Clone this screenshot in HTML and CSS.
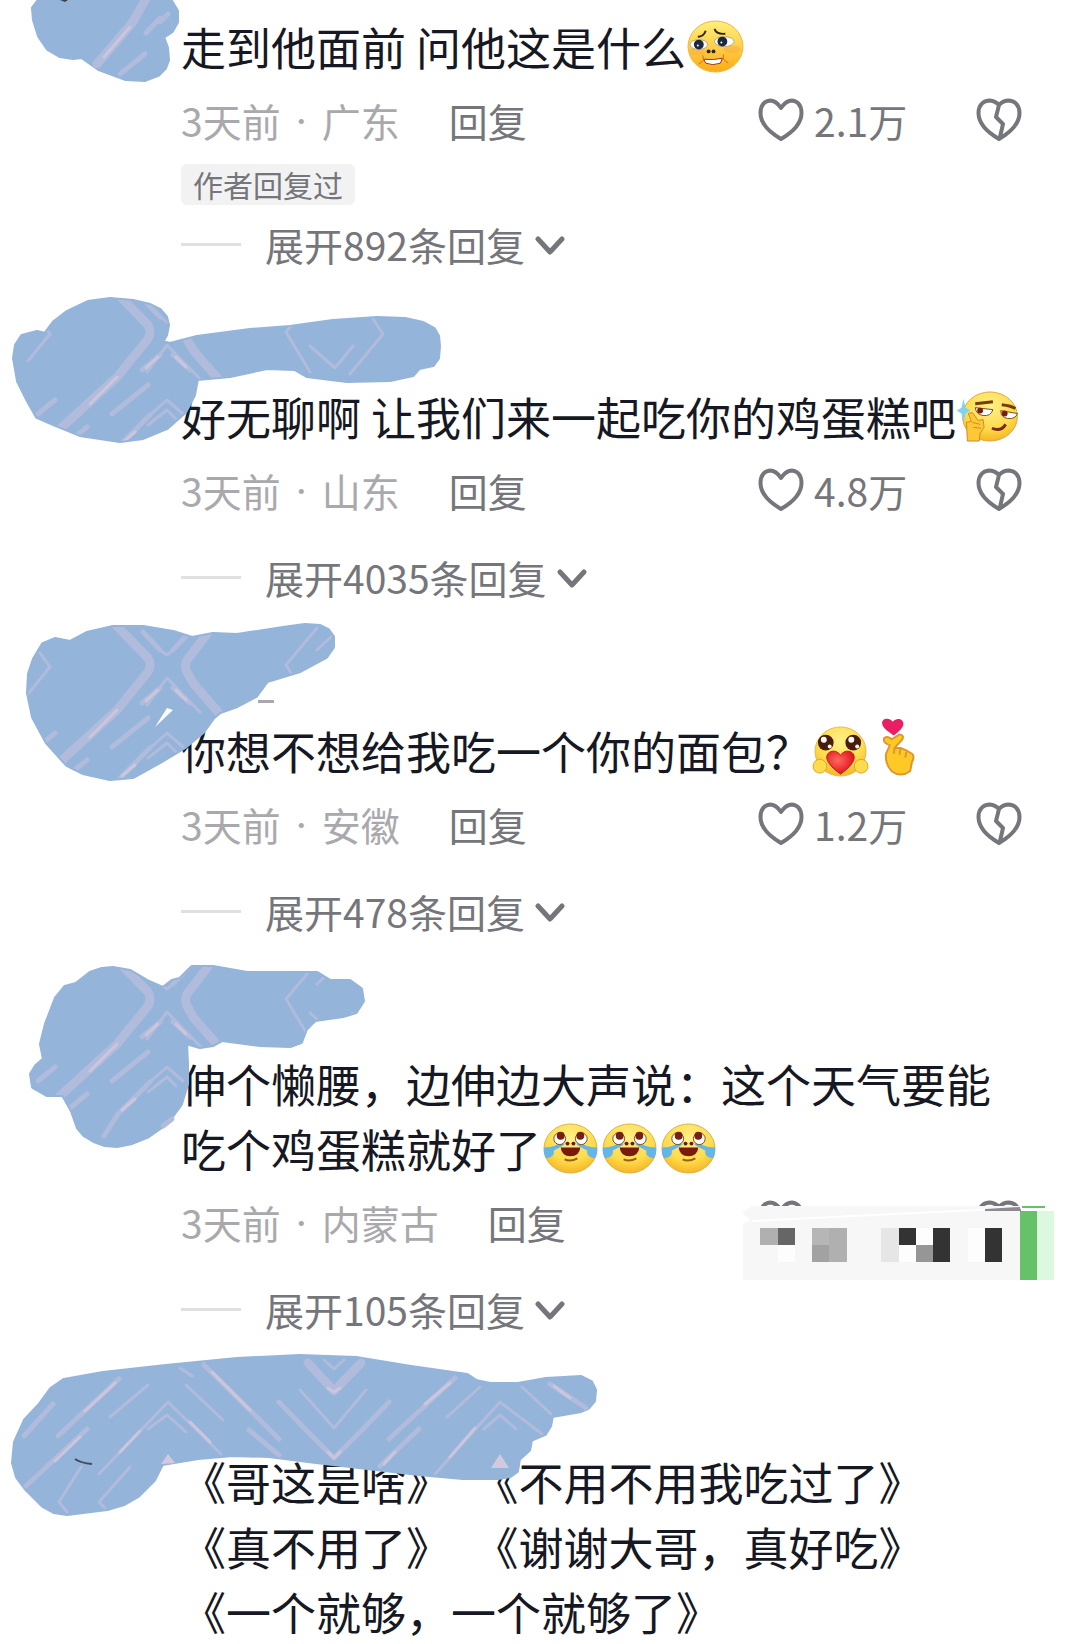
FILE: index.html
```
<!DOCTYPE html>
<html lang="zh-CN">
<head>
    <meta charset="UTF-8">
    <meta name="viewport" content="width=device-width, initial-scale=1.0">
    <title>评论</title>
    <link rel="stylesheet" href="styles.css">
</head>
<body>
    <!-- Shared icons -->
    <svg class="sprite" width="0" height="0" aria-hidden="true">
        <defs>
            <radialGradient id="face" cx="0.5" cy="0.3" r="0.75">
                <stop offset="0" stop-color="#fff08a"/>
                <stop offset="0.6" stop-color="#fddc4c"/>
                <stop offset="1" stop-color="#f6ae1e"/>
            </radialGradient>
            <linearGradient id="faceWarm" x1="0" y1="0" x2="0" y2="1">
                <stop offset="0" stop-color="#fdf07c"/>
                <stop offset="0.5" stop-color="#fdd04a"/>
                <stop offset="1" stop-color="#fbab14"/>
            </linearGradient>
            <radialGradient id="red" cx="0.4" cy="0.4" r="0.6">
                <stop offset="0" stop-color="#ff6a60"/>
                <stop offset="1" stop-color="#e0141c"/>
            </radialGradient>
        </defs>
        <symbol id="heart" viewBox="0 0 46 44">
            <path d="M23 10C19 4 15 2.500 12 2.500C6 3 2.500 8 2.500 15C2.500 26 11 34 23 41C35 34 43.500 26 43.500 15C43.500 8 40 3 34 2.500C31 2.500 27 4 23 10Z"/>
        </symbol>
        <symbol id="broken" viewBox="0 0 46 44">
            <path d="M23 7C19 3 16 2.500 13 2.500C6.500 3 2.500 8 2.500 15C2.500 26 11 34 23 41C35 34 43.500 26 43.500 15C43.500 8 39.500 3 33 2.500C29 2.500 26 3.500 23 7ZM23 7L20 19L27 26L24 39"/>
        </symbol>
        <symbol id="chevron" viewBox="0 0 30 20">
            <path d="M3 3L15 16L27 3"/>
        </symbol>
        <symbol id="worried" viewBox="0 0 60 54">
            <ellipse cx="30" cy="27" rx="28" ry="26" fill="url(#faceWarm)" stroke="#f3b23a"/>
            <ellipse cx="11" cy="32" rx="8" ry="4" fill="#fba445" opacity="0.4"/>
            <ellipse cx="47" cy="30" rx="9" ry="4" fill="#fba445" opacity="0.4"/>
            <ellipse cx="13" cy="25" rx="9" ry="5" fill="#fff" stroke="#b5a878"/>
            <ellipse cx="39" cy="22" rx="10" ry="5" fill="#fff" stroke="#b5a878"/>
            <circle cx="13" cy="25" r="5" fill="#1c2740"/>
            <circle cx="37" cy="22" r="5" fill="#1c2740"/>
            <circle cx="12" cy="26" r="1" fill="#fff"/>
            <circle cx="36" cy="23" r="1" fill="#fff"/>
            <path d="M12 17Q18 17 20 11M29 9Q31 15 40 14" fill="none" stroke="#33250d" stroke-width="2"/>
            <circle cx="23" cy="32" r="2" fill="#33250d"/>
            <circle cx="28" cy="32" r="2" fill="#33250d"/>
            <path d="M18 40Q28 41 37 39L35 44Q27 47 20 44Z" fill="#fff" stroke="#a32c18"/>
            <path d="M17 36L18 41L13 45M38 35V40L43 44" fill="none" stroke="#d9681a" stroke-width="1"/>
        </symbol>
        <symbol id="smirk" viewBox="0 0 64 54">
            <ellipse cx="34" cy="27" rx="28" ry="25" fill="url(#face)" stroke="#dba743"/>
            <path d="M19 14L37 12M46 15Q56 16 60 19" fill="none" stroke="#7a3a0c" stroke-width="3"/>
            <path d="M19 18L37 20Q35 27 27 26Q20 25 19 18Z" fill="#fff" stroke="#7a4a1c"/>
            <path d="M45 21L62 24Q60 30 52 29Q45 28 45 21Z" fill="#fff" stroke="#7a4a1c"/>
            <circle cx="24" cy="21" r="3" fill="#7a1f10"/>
            <circle cx="49" cy="24" r="3" fill="#7a1f10"/>
            <path d="M36 39Q45 43 50 35" fill="none" stroke="#7a2a10" stroke-width="3"/>
            <path d="M11 52L10 33L15 32L12 24L16 23L22 31L27 30L28 38L24 44L23 52Z" fill="#fcc835" stroke="#d0892a" stroke-linejoin="round"/>
            <path d="M16 33L24 35M17 38L25 39" stroke="#d0892a"/>
            <path d="M7 9L9 18L14 21L9 24L7 33L5 24L0 21L5 18Z" fill="#7fd3ee"/>
        </symbol>
        <symbol id="hug" viewBox="0 0 60 54">
            <ellipse cx="30" cy="28" rx="26" ry="25" fill="url(#face)" stroke="#e3b75a"/>
            <circle cx="15" cy="19" r="8" fill="#4a1c0c"/>
            <circle cx="43" cy="19" r="8" fill="#4a1c0c"/>
            <circle cx="13" cy="16" r="3" fill="#fff"/>
            <circle cx="41" cy="16" r="3" fill="#fff"/>
            <circle cx="19" cy="23" r="2" fill="#fff"/>
            <circle cx="47" cy="23" r="2" fill="#fff"/>
            <path d="M30 51C20 44 16 38 16 34C16 27 26 25 30 32C34 25 44 27 44 34C44 38 40 44 30 51Z" fill="url(#red)" stroke="#c41518"/>
            <circle cx="9" cy="43" r="7" fill="#fddc4c" stroke="#dfa22e"/>
            <circle cx="51" cy="43" r="7" fill="#fddc4c" stroke="#dfa22e"/>
        </symbol>
        <symbol id="finger" viewBox="0 0 60 62">
            <path d="M24 19C16 14 12 10 12 6C12 1 20 0 23 5C27 0 34 2 34 7C34 11 30 15 24 19Z" fill="#ea1f63"/>
            <path d="M14 22Q18 19 22 23L30 18Q35 19 33 23L25 32L31 32L36 34L43 38Q46 41 43 46L41 56Q31 63 22 56Q15 49 16 38L20 29Q13 27 14 22Z" fill="#fdc926" stroke="#e0962c" stroke-width="2" stroke-linejoin="round"/>
            <path d="M25 32L24 38M31 33L30 39M37 36L36 42" stroke="#e0962c" stroke-width="2"/>
        </symbol>
        <symbol id="tears" viewBox="0 0 60 54">
            <ellipse cx="30" cy="27" rx="27" ry="25" fill="url(#face)" stroke="#d9b24c"/>
            <path d="M19 20Q17 25 3 26Q2 32 5 37Q14 36 13 29Q20 26 24 23ZM41 20Q43 25 57 26Q58 32 55 37Q46 36 47 29Q40 26 36 23Z" fill="#64b5ea"/>
            <circle cx="19" cy="17" r="6" fill="#fff" stroke="#7a4a1c"/>
            <circle cx="41" cy="17" r="6" fill="#fff" stroke="#7a4a1c"/>
            <circle cx="20" cy="14" r="4" fill="#7a1f10"/>
            <circle cx="40" cy="14" r="4" fill="#7a1f10"/>
            <circle cx="27" cy="22" r="2" fill="#6b1c0c"/>
            <circle cx="33" cy="22" r="2" fill="#6b1c0c"/>
            <path d="M20 26H40Q39 35 30 35Q21 35 20 26Z" fill="#7a1a0c"/>
            <path d="M24 38Q30 41 37 37" fill="none" stroke="#a35a18" stroke-width="2"/>
        </symbol>
        <g id="streaks">
            <path class="wide" d="M115 22L148 56Q152 63 148 70L117 108L60 160M210 28L187 58Q184 64 187 70L193 81L220 112"/>
            <path class="mid" d="M143 30L160 48M173 48L190 30M160 86L142 101M173 86L190 101M148 116L112 145M55 131L38 145M87 158L70 172M118 178L150 146"/>
            <path class="thin" d="M160 48L167 53L173 48M147 103L167 76L200 110M150 146L167 131L183 145M148 156L167 141L176 150M28 92L50 65L40 51M317 26L286 63L310 103M373 50L383 65L350 105M310 77L335 99L353 77M333 33L317 48"/>
            <path class="pink" d="M117 108L90 135M158 88L146 99M176 88L186 98M135 163L122 174"/>
        </g>
    </svg>

    <main class="comments">
        <article class="comment first">
            <p class="text">走到他面前 问他这是什么<svg class="emoji" role="img" aria-label="委屈"><use href="#worried"/></svg></p>
            <div class="meta">
                <span>3天前</span><span class="dot">·</span><span>广东</span>
                <button class="reply">回复</button>
                <div class="actions">
                    <button class="like"><svg class="icon"><use href="#heart"/></svg>2.1万</button>
                    <button class="dislike" aria-label="不喜欢"><svg class="icon"><use href="#broken"/></svg></button>
                </div>
            </div>
            <span class="badge">作者回复过</span>
            <button class="expand">展开892条回复<svg class="chevron"><use href="#chevron"/></svg></button>
            <svg class="scribble" viewBox="0 0 640 200" aria-hidden="true">
                <polygon points="42,-4 33,8 34,20 39,36 48,49 60,56 73,58 82,57 99,69 126,79 145,80 158,75 165,68 168,60 167,48 163,37 172,31 177,22 177,11 168,-4"/>
                <path class="wide" d="M145 0L133 22L97 64"/>
                <path class="mid" d="M160 18L146 33M168 14L160 22M145 54L120 74"/>
                <path class="pink" d="M130 27L104 57"/>
                <path d="M60 0H68L65 2Z" fill="#3c444c"/>
            </svg>
        </article>

        <article class="comment">
            <p class="text">好无聊啊 让我们来一起吃你的鸡蛋糕吧<svg class="emoji wide-emoji" role="img" aria-label="机智"><use href="#smirk"/></svg></p>
            <div class="meta">
                <span>3天前</span><span class="dot">·</span><span>山东</span>
                <button class="reply">回复</button>
                <div class="actions">
                    <button class="like"><svg class="icon"><use href="#heart"/></svg>4.8万</button>
                    <button class="dislike" aria-label="不喜欢"><svg class="icon"><use href="#broken"/></svg></button>
                </div>
            </div>
            <button class="expand">展开4035条回复<svg class="chevron"><use href="#chevron"/></svg></button>
            <svg class="scribble" viewBox="0 0 640 200" aria-hidden="true">
                <clipPath id="clip2"><polygon points="45,65 54,53 67,43 88,33 110,30 133,32 150,36 160,41 166,48 168,56 166,66 162,73 170,75 197,68 250,61 290,58 333,52 377,49 405,50 423,54 434,60 440,70 438,89 433,96 419,99 413,106 390,111 347,112 307,107 295,100 267,99 230,107 197,110 194,126 185,143 167,159 143,169 120,172 80,166 53,155 37,148 28,132 18,112 14,89 16,76 22,67 37,63"/></clipPath>
                <polygon points="45,65 54,53 67,43 88,33 110,30 133,32 150,36 160,41 166,48 168,56 166,66 162,73 170,75 197,68 250,61 290,58 333,52 377,49 405,50 423,54 434,60 438,67 439,77 438,89 433,96 419,99 413,106 390,111 347,112 307,107 295,100 267,99 230,107 197,110 194,126 185,143 167,159 143,169 120,172 80,166 53,155 37,148 28,132 18,112 14,89 16,76 22,67 37,63"/>
                <use href="#streaks" clip-path="url(#clip2)"/>
            </svg>
        </article>

        <article class="comment">
            <p class="text">你想不想给我吃一个你的面包？<svg class="emoji" role="img" aria-label="比心"><use href="#hug"/></svg><svg class="emoji tall-emoji" role="img" aria-label="爱心手势"><use href="#finger"/></svg></p>
            <div class="meta">
                <span>3天前</span><span class="dot">·</span><span>安徽</span>
                <button class="reply">回复</button>
                <div class="actions">
                    <button class="like"><svg class="icon"><use href="#heart"/></svg>1.2万</button>
                    <button class="dislike" aria-label="不喜欢"><svg class="icon"><use href="#broken"/></svg></button>
                </div>
            </div>
            <button class="expand">展开478条回复<svg class="chevron"><use href="#chevron"/></svg></button>
            <svg class="scribble" viewBox="0 0 640 200" aria-hidden="true">
                <clipPath id="clip3"><polygon points="70,40 87,31 113,25 143,25 173,30 192,36 213,32 237,33 283,26 305,23 320,24 331,31 334,45 326,55 300,69 267,79 256,94 237,104 220,110 213,116 203,130 185,145 160,160 133,175 110,177 83,171 67,163 47,141 33,115 28,91 29,72 34,57 43,42 55,37 65,39"/></clipPath>
                <polygon points="70,40 87,31 113,25 143,25 173,30 192,36 213,32 237,33 283,26 305,23 320,24 328,28 333,35 333,45 326,55 300,69 267,79 256,94 237,104 220,110 213,116 203,130 185,145 160,160 133,175 110,177 83,171 67,163 47,141 33,115 28,91 29,72 34,57 43,42 55,37 65,39"/>
                <use href="#streaks" clip-path="url(#clip3)"/>
                <path d="M167 106L173 108L155 125Z" fill="#fff"/>
                <rect x="258" y="98" width="16" height="3" fill="#a9a9ab"/>
            </svg>
        </article>

        <article class="comment">
            <p class="text">伸个懒腰，边伸边大声说：这个天气要能吃个鸡蛋糕就好了<svg class="emoji" role="img" aria-label="笑哭"><use href="#tears"/></svg><svg class="emoji" role="img" aria-label="笑哭"><use href="#tears"/></svg><svg class="emoji" role="img" aria-label="笑哭"><use href="#tears"/></svg></p>
            <div class="meta">
                <span>3天前</span><span class="dot">·</span><span>内蒙古</span>
                <button class="reply">回复</button>
                <div class="actions">
                    <button class="like" aria-label="喜欢"><svg class="icon"><use href="#heart"/></svg></button>
                    <button class="dislike" aria-label="不喜欢"><svg class="icon"><use href="#broken"/></svg></button>
                    <svg class="mosaic" viewBox="0 0 312 76" aria-hidden="true">
                        <path d="M0 9L10 2H278V76H1V20L8 16Z" fill="#f7f7f7"/>
                        <path d="M10 17L278 4" stroke="#fff" stroke-width="2"/>
                        <path d="M243 5L278 3V7H243Z" fill="#8d8a92"/>
                        <path d="M280 2H303V4H280ZM278 7H295V76H278Z" fill="#67c168"/>
                        <path d="M295 7H312V76H295Z" fill="#dcf9df"/>
                        <path d="M18 24H36V41H18ZM87 24H105V58H87Z" fill="#b0b0b0"/>
                        <path d="M36 24H53V41H36Z" fill="#666"/>
                        <path d="M70 24H87V41H70Z" fill="#b6b6b6"/>
                        <path d="M70 41H87V58H70Z" fill="#a2a2a2"/>
                        <path d="M139 24H157V58H139Z" fill="#e6e6e6"/>
                        <path d="M36 41H53V58H36ZM157 41H174V58H157ZM174 24H191V41H174ZM226 24H243V58H226Z" fill="#fdfdfd"/>
                        <path d="M157 24H174V41H157ZM191 24H208V58H191ZM243 24H260V58H243Z" fill="#333"/>
                        <path d="M174 41H191V58H174Z" fill="#969696"/>
                    </svg>
                </div>
            </div>
            <button class="expand">展开105条回复<svg class="chevron"><use href="#chevron"/></svg></button>
            <svg class="scribble" viewBox="0 0 640 220" aria-hidden="true">
                <clipPath id="clip4"><polygon points="76,48 90,37 102,33 113,32 130,35 147,45 163,52 172,45 180,43 192,31 213,31 247,37 317,37 330,45 350,45 361,53 364,63 356,76 343,80 315,84 306,93 301,106 290,110 260,109 222,104 213,109 200,111 186,107 187,128 187,148 181,168 167,187 147,201 117,210 94,205 78,192 72,175 63,159 47,159 33,151 31,138 36,130 44,123 41,108 46,88 56,62 65,51"/></clipPath>
                <polygon points="76,48 90,37 102,33 113,32 130,35 147,45 163,52 172,45 180,43 192,31 213,31 247,37 317,37 330,45 350,45 361,53 363,65 356,76 343,80 315,84 306,93 301,106 290,110 260,109 222,104 213,109 200,111 186,107 187,128 187,148 181,168 167,187 147,201 132,207 117,210 105,209 94,205 84,199 78,192 72,175 63,159 47,159 33,151 31,138 36,130 44,123 41,108 46,88 56,62 65,51"/>
                <use href="#streaks" clip-path="url(#clip4)"/>
                <path class="mid" d="M118 178L104 200M172 183L163 190"/>
            </svg>
        </article>

        <article class="comment">
            <p class="text">《哥这是啥》&ensp;《不用不用我吃过了》<br>《真不用了》&ensp;《谢谢大哥，真好吃》<br>《一个就够，一个就够了》</p>
            <svg class="scribble" viewBox="0 0 640 200" aria-hidden="true">
                <polygon points="64,46 103,39 166,32 237,25 300,22 356,24 411,33 467,41 476,47 490,50 518,50 546,45 581,43 591,48 595,56 594,67 588,74 581,77 552,82 550,92 545,100 531,106 529,116 519,125 517,137 510,142 498,144 463,144 419,140 376,135 316,128 269,122 233,121 198,124 162,130 154,146 138,162 124,170 107,175 67,180 54,178 43,172 26,155 17,143 13,129 15,108 25,86 40,70 51,55"/>
                <path class="wide" d="M308 29L334 57L361 29"/>
                <path class="mid" d="M119 45L58 102M87 95L26 152M53 70L24 102M204 31L279 105M249 96L279 121M279 68L308 98L334 124L360 98L389 68M455 44L389 105M419 95L380 132M550 50L586 74"/>
                <path class="thin" d="M148 51L110 83M180 34L192 42M99 140L168 68L221 120M148 95L167 81L186 98M186 51L223 86M324 26L334 35L344 26M300 56L334 94L366 56M480 53L447 83M435 140L500 68L542 100M484 95L500 81L516 95M522 53L551 80M81 133L59 168L67 178M130 133L99 168L105 174"/>
                <path class="pink" d="M115 49L85 77M80 103L55 127M212 38L250 76M328 54L334 58L340 54M328 118L334 124L340 118M450 49L425 70M395 118L384 130M554 52L570 64M140 97L120 118M190 88L210 108M475 94L450 123"/>
                <path d="M168 120L175 129L161 130ZM500 120L509 134L491 134Z" fill="#d3c9df"/>
                <path d="M75 125Q81 129 92 130" fill="none" stroke="#424c58" stroke-width="2"/>
            </svg>
        </article>
    </main>
</body>
</html>
```
FILE: styles.css
```
* {
    box-sizing: border-box;
}

body {
    margin: 0;
    background-color: #fff;
    color: #161823;
    font-family: "Noto Sans CJK SC", "Noto Sans", sans-serif;
}

.sprite {
    position: absolute;
}

.comment {
    position: relative;
    padding: 117px 58px 0 181px;
}

.comment.first {
    padding-top: 14px;
}

.text {
    margin: 0;
    font-size: 45px;
    line-height: 65px;
}

.emoji {
    width: 59px;
    height: 53px;
    vertical-align: -7px;
}

.wide-emoji {
    width: 64px;
}

.tall-emoji {
    height: 60px;
}

/* Time, place and actions */
.meta {
    display: flex;
    align-items: center;
    height: 46px;
    margin-top: 18px;
    font-size: 39px;
    line-height: 46px;
    color: #a9a9ad;
}

.dot {
    width: 41px;
    font-size: 24px;
    text-align: center;
}

button {
    padding: 0;
    border: none;
    background: none;
    font-family: inherit;
    font-size: 39px;
    line-height: 46px;
    color: #75767b;
    cursor: pointer;
}

.reply {
    margin-left: 49px;
}

.actions {
    position: relative;
    display: flex;
    margin-left: auto;
}

.like {
    display: flex;
    align-items: center;
    gap: 10px;
    width: 218px;
}

.dislike {
    display: flex;
    align-items: center;
}

.icon {
    width: 46px;
    height: 44px;
}

.icon, .chevron {
    fill: none;
    stroke: #75767b;
    stroke-width: 4px;
    stroke-linejoin: round;
    stroke-linecap: round;
}

.mosaic {
    position: absolute;
    top: 4px;
    right: -32px;
    width: 312px;
    height: 76px;
}

.badge {
    display: block;
    width: fit-content;
    margin-top: 21px;
    padding: 0 12px;
    border-radius: 6px;
    background-color: #f2f2f3;
    font-size: 30px;
    line-height: 41px;
    color: #75767b;
}

.expand {
    display: flex;
    align-items: center;
    margin-top: 41px;
}

.badge + .expand {
    margin-top: 16px;
}

.expand::before {
    content: "";
    width: 60px;
    height: 3px;
    margin-right: 24px;
    background-color: #e0e0e1;
}

.chevron {
    width: 30px;
    height: 20px;
    margin-top: 4px;
    margin-left: 10px;
    stroke-width: 5px;
}

/* Brush marks over the avatar and name */
.scribble {
    position: absolute;
    top: 2px;
    left: 0;
    width: 640px;
    pointer-events: none;
}

.first .scribble {
    top: 0;
}

.scribble polygon {
    fill: #94b4da;
    stroke: #94b4da;
    stroke-width: 4px;
    stroke-linejoin: round;
}

.wide, .mid, .thin, .pink {
    fill: none;
    stroke: #b1bbdb;
    stroke-linecap: round;
    stroke-linejoin: round;
}

.wide {
    stroke-width: 9px;
}

.mid {
    stroke-width: 5px;
}

.thin {
    stroke-width: 3px;
}

.pink {
    stroke: #cbc5de;
    stroke-width: 3px;
}
```
